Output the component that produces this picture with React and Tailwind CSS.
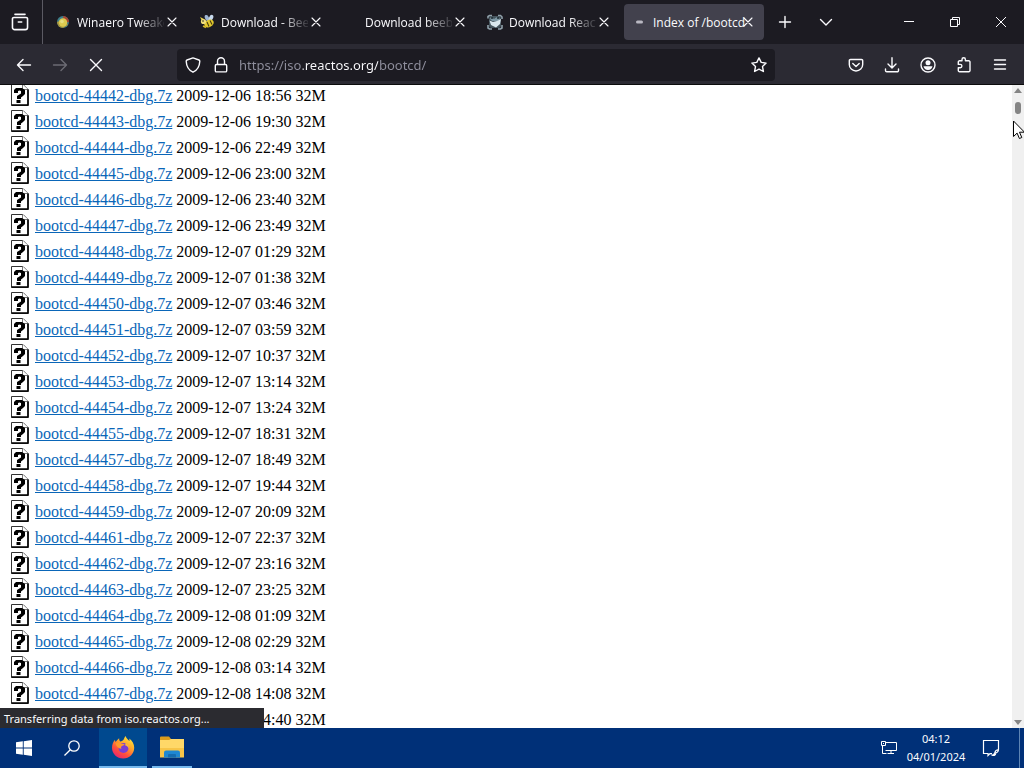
import { useState } from 'react';

const files = [
    ['44442', '2009-12-06 18:56'],
    ['44443', '2009-12-06 19:30'],
    ['44444', '2009-12-06 22:49'],
    ['44445', '2009-12-06 23:00'],
    ['44446', '2009-12-06 23:40'],
    ['44447', '2009-12-06 23:49'],
    ['44448', '2009-12-07 01:29'],
    ['44449', '2009-12-07 01:38'],
    ['44450', '2009-12-07 03:46'],
    ['44451', '2009-12-07 03:59'],
    ['44452', '2009-12-07 10:37'],
    ['44453', '2009-12-07 13:14'],
    ['44454', '2009-12-07 13:24'],
    ['44455', '2009-12-07 18:31'],
    ['44457', '2009-12-07 18:49'],
    ['44458', '2009-12-07 19:44'],
    ['44459', '2009-12-07 20:09'],
    ['44461', '2009-12-07 22:37'],
    ['44462', '2009-12-07 23:16'],
    ['44463', '2009-12-07 23:25'],
    ['44464', '2009-12-08 01:09'],
    ['44465', '2009-12-08 02:29'],
    ['44466', '2009-12-08 03:14'],
    ['44467', '2009-12-08 14:08'],
    ['44468', '2009-12-08 14:40'],
];

const tabs = [
    { title: 'Winaero Tweake', icon: <WinaeroIcon /> },
    { title: 'Download - Bee', icon: <BeeIcon /> },
    { title: 'Download beeb', icon: null },
    { title: 'Download React', icon: <ReactosIcon /> },
    { title: 'Index of /bootcd', icon: <LoadingIcon /> },
];

function Icon({ size = 16, width = 1.4, children }) {
    return (
        <svg
            width={size}
            height={size}
            viewBox="0 0 16 16"
            fill="none"
            stroke="currentColor"
            strokeWidth={width}
            strokeLinecap="round"
            strokeLinejoin="round"
            aria-hidden="true"
        >
            {children}
        </svg>
    );
}

function WinaeroIcon() {
    return (
        <svg width="14" height="14" viewBox="0 0 14 14" aria-hidden="true">
            <circle cx="7" cy="7" r="6" fill="#3d7f8c" />
            <path d="M7 1a6 6 0 0 1 6 6l-5 1z" fill="#a8452f" />
            <path d="M1 7a6 6 0 0 0 6 6l5-3-4-6z" fill="#a8953c" />
            <circle cx="7" cy="7.5" r="4.200" fill="#dccb50" />
            <circle cx="6" cy="6.500" r="1.8" fill="#e6df80" />
        </svg>
    );
}

function BeeIcon() {
    return (
        <svg width="16" height="16" viewBox="0 0 16 16" aria-hidden="true">
            <ellipse cx="8" cy="4" rx="2" ry="3.2" fill="#9fb6d4" transform="rotate(-25 8 4)" />
            <ellipse cx="12" cy="4" rx="2" ry="3.4" fill="#c7d9ee" transform="rotate(25 12 4)" />
            <path d="M1 3l4 2-2 2z" fill="#e8d44a" />
            <ellipse cx="10" cy="9.500" rx="5" ry="3.6" fill="#e2c92e" transform="rotate(-30 10 9.500)" />
            <path d="M8 8l2 4.500M11 6.500l2 4" stroke="#4a3c10" strokeWidth="1.100" />
            <circle cx="4.500" cy="7.500" r="2.600" fill="#f1e07a" />
            <circle cx="4" cy="7" r="0.800" fill="#222" />
            <path d="M4 12l3 1.500" stroke="#d9bd2a" strokeWidth="1.500" />
        </svg>
    );
}

function ReactosIcon() {
    return (
        <svg width="16" height="16" viewBox="0 0 16 16" aria-hidden="true">
            <rect x="2" y="2" width="12" height="12" rx="3" fill="#46555e" />
            <path
                d="M1 4.500V2.500L2.500 1.500H5M11 1.500h2.500L15 3v2M1 11v3l1.500 1H5M15 11v3l-1.500 1H11"
                fill="none"
                stroke="#8fa0aa"
                strokeWidth="1.600"
            />
            <path d="M4 3l3 2 3-2 3 2-2 2H5L3 5z" fill="#7d98a5" />
            <path d="M2.500 6.500L6 8l4-1 4-2-1 5-4 3.500L4 11z" fill="#dbe8ee" />
            <circle cx="5" cy="4" r="1" fill="#1d2b33" />
            <circle cx="11" cy="4" r="1" fill="#1d2b33" />
        </svg>
    );
}

function LoadingIcon() {
    return (
        <svg width="16" height="16" viewBox="0 0 16 16" aria-hidden="true">
            <rect x="5" y="6.500" width="7" height="3" rx="1.500" fill="#b9b8c2" />
        </svg>
    );
}

// Apache's "unknown file" icon
function UnknownFileIcon() {
    return (
        <svg className="mb-0.5 shrink-0" width="20" height="22" viewBox="0 0 20 22" aria-hidden="true">
            <path d="M1.500 .500H13L18 5.500V21.500H1.500z" fill="#fff" stroke="#333" />
            <path d="M12.500 .500V5.500H18" fill="#fff" stroke="#777" />
            <path d="M18 5.500V21H1.500" fill="none" stroke="#000" strokeWidth="1.600" />
            <path
                d="M4 9V6L6 4h6l3 2v4l-2 2-2 1.500v1.500H7V12l4-2.500V7L9.500 6.500 8 7v2z"
                fill="#000"
            />
            <path d="M6.500 16h4v3h-4z" fill="#000" />
        </svg>
    );
}

function FirefoxIcon() {
    return (
        <svg width="24" height="24" viewBox="0 0 24 24" aria-hidden="true">
            <defs>
                <linearGradient id="fox" x1="0.800" y1="0.100" x2="0.250" y2="0.950">
                    <stop offset="0" stopColor="#ffe03a" />
                    <stop offset="0.350" stopColor="#ffa42b" />
                    <stop offset="0.700" stopColor="#ff4f3c" />
                    <stop offset="1" stopColor="#e9286c" />
                </linearGradient>
            </defs>
            <path
                d="M14.500 1c.8 2.200 2.400 3.500 4 5 .1-.9 0-1.600-.3-2.400 3 2 5 5.600 5 9.200C23.200 19 18.300 23.500 12.200 23.500 6 23.500 1 18.900 1 12.800 1 9.600 2 7 4 4.800c0 1 .2 1.700.6 2.300C5.600 5.300 7 4.200 8.200 3.200c-.2 1.300.2 2.300 1 3.200 1.800-.1 2.800-.7 3.300-1.600.6-1.100 1-2.400 2-3.800z"
                fill="url(#fox)"
            />
            <circle cx="12.500" cy="13" r="5" fill="#7a3fd3" />
            <path d="M14.500 8c2.500 1 3.800 3.300 3.300 5.800-.7-1.800-1.800-2.900-3.600-3.200z" fill="#ffbd35" />
            <path d="M4.500 8.500c2-1.300 4.300-1.200 6.200.2 1.200-.1 2.300.1 3 .6-.8 1.200-2.100 1.400-3 1.900-.9.600-.8 1.600-.1 2.400-2.800.3-4.900-1.700-6.100-5.100z" fill="#ff9a2b" />
        </svg>
    );
}

function FolderIcon() {
    return (
        <svg width="24" height="24" viewBox="0 0 24 24" aria-hidden="true">
            <path d="M0 2.500Q0 1.500 1 1.500H9L11 4H23Q24 4 24 5V8H0z" fill="#d99a1c" />
            <path d="M0 5H9L11 4H24V22H0z" fill="#ffd868" />
            <path d="M0 13H24V22.500H0z" fill="#f7c548" />
            <path d="M4 22.500V17.500Q4 15.500 6 15.500H18Q20 15.500 20 17.500V22.500z" fill="#1e88d2" />
            <path d="M8 22.500V20Q8 19 9 19H15Q16 19 16 20V22.500z" fill="#146cb0" />
        </svg>
    );
}

function Tab({ tab, active, onClick }) {
    return (
        <div
            className={`flex h-9 w-[140px] shrink-0 items-center rounded pl-[7px] pr-2 font-['Open_Sans',sans-serif] ${active ? 'bg-[#42414d]' : ''}`}
        >
            <button className="flex min-w-0 flex-1 items-center gap-1.5 text-left" onClick={onClick}>
                <span className="flex size-4 shrink-0 items-center justify-center">{tab.icon}</span>
                <span
                    className={`min-w-0 flex-1 whitespace-nowrap pt-0.5 ${active ? '' : '[mask-image:linear-gradient(to_right,#000_60px,transparent_90px)]'}`}
                >
                    {tab.title}
                </span>
            </button>
            <button className="shrink-0" aria-label="Close tab">
                <Icon width={1.1}>
                    <path d="M4 4l8 8M12 4l-8 8" />
                </Icon>
            </button>
        </div>
    );
}

function NavButton({ label, children }) {
    return (
        <button className="flex h-8 w-9 items-center justify-center" aria-label={label}>
            {children}
        </button>
    );
}

function App() {
    const [activeTab, setActiveTab] = useState(4);
    const [url, setUrl] = useState('https://iso.reactos.org/bootcd/');

    return (
        <div className="relative flex h-screen flex-col overflow-hidden bg-white font-['Noto_Sans','Open_Sans',sans-serif] text-xs text-[#fbfbfe]">
            <div className="flex h-11 shrink-0 items-center bg-[#1c1b22]">
                <button className="flex h-full w-[43px] items-center justify-center border-r border-[#5b5a63] pr-0.5" aria-label="Recent browsing">
                    <Icon size={18}>
                        <path d="M3.500 1.200h9M2.500 4h11a1.200 1.200 0 0 1 1.200 1.200v7.600a2 2 0 0 1-2 2H3.300a2 2 0 0 1-2-2V5.200A1.200 1.200 0 0 1 2.500 4zM6.500 8h3" />
                    </Icon>
                </button>
                <div className="ml-[5px] flex gap-1">
                    {tabs.map((tab, i) => (
                        <Tab key={tab.title} tab={tab} active={i === activeTab} onClick={() => setActiveTab(i)} />
                    ))}
                </div>
                <button className="ml-px flex h-8 w-10 items-center justify-center" aria-label="New tab">
                    <Icon><path d="M8 2.500v11M2.500 8h11" /></Icon>
                </button>
                <button className="ml-px flex h-8 w-10 items-center justify-center" aria-label="List all tabs">
                    <Icon><path d="M2.500 5.500L8 11l5.500-5.500" /></Icon>
                </button>
                <div className="ml-auto flex h-full">
                    <button className="flex w-[46px] items-center justify-center" aria-label="Minimize">
                        <svg width="10" height="10" viewBox="0 0 10 10" stroke="currentColor"><path d="M0 4.500h10" /></svg>
                    </button>
                    <button className="flex w-[46px] items-center justify-center" aria-label="Restore">
                        <svg width="10" height="10" viewBox="0 0 10 10" fill="none" stroke="currentColor">
                            <path d="M.500 2.500h7v7h-7zM2.500 2.500v-2h7v7h-2" />
                        </svg>
                    </button>
                    <button className="flex w-[46px] items-center justify-center" aria-label="Close">
                        <svg width="10" height="10" viewBox="0 0 10 10" stroke="currentColor"><path d="M0 0l10 10M10 0L0 10" /></svg>
                    </button>
                </div>
            </div>

            <div className="flex h-[41px] shrink-0 items-center border-b border-[#0c0c0d] bg-[#2b2a33] px-1.5 pt-px">
                <NavButton label="Back">
                    <Icon><path d="M14.500 8H1.500M7 2.500L1.500 8 7 13.500" /></Icon>
                </NavButton>
                <NavButton label="Forward">
                    <span className="text-[#6c6b74]">
                        <Icon><path d="M1.500 8h13M9 2.500L14.500 8 9 13.500" /></Icon>
                    </span>
                </NavButton>
                <NavButton label="Stop">
                    <Icon><path d="M2.500 2.500l11 11M13.500 2.500l-11 11" /></Icon>
                </NavButton>
                <div className="mx-[63px] flex h-8 flex-1 items-center rounded bg-[#1c1b22] px-2">
                    <button aria-label="Tracking protection">
                        <Icon><path d="M8 .900l6 2.100c.600.200.800.600.800 1.200C14.600 9 12.500 13 8 15.200 3.500 13 1.400 9 1.200 4.200 1.200 3.600 1.400 3.200 2 3z" /></Icon>
                    </button>
                    <button className="ml-3" aria-label="Site information">
                        <Icon>
                            <path d="M3.500 7.500h9a1.200 1.200 0 0 1 1.200 1.200v5a1.200 1.200 0 0 1-1.200 1.200h-9a1.200 1.200 0 0 1-1.200-1.200v-5a1.200 1.200 0 0 1 1.200-1.200zM4.500 7.500V4.300a3.500 3.500 0 0 1 7 0v3.200" />
                        </Icon>
                    </button>
                    <input
                        className="ml-2.5 min-w-0 flex-1 bg-[linear-gradient(to_right,#8f8f9d_64px,#fbfbfe_64px,#fbfbfe_139px,#8f8f9d_139px)] bg-clip-text pt-0.5 text-[13px] text-transparent outline-none"
                        aria-label="Address"
                        value={url}
                        onChange={(e) => setUrl(e.target.value)}
                    />
                    <button aria-label="Bookmark this page">
                        <Icon><path d="M8 .900l2.200 4.500 4.900.700-3.600 3.500.900 4.900L8 12.200l-4.400 2.300.900-4.900L.900 6.100l4.900-.700z" /></Icon>
                    </button>
                </div>
                <NavButton label="Save to Pocket">
                    <Icon>
                        <path d="M2.500 2.500h11a1.200 1.200 0 0 1 1.200 1.200V7.500a6.700 6.500 0 0 1-13.400 0V3.700a1.200 1.200 0 0 1 1.200-1.200zM4.800 6.500L8 9.500l3.200-3" />
                    </Icon>
                </NavButton>
                <NavButton label="Downloads">
                    <Icon><path d="M8 .800v10M4 7l4 4 4-4M1.500 12v1.500a1.300 1.300 0 0 0 1.300 1.300h10.400a1.300 1.300 0 0 0 1.300-1.300V12" /></Icon>
                </NavButton>
                <NavButton label="Account">
                    <Icon>
                        <circle cx="8" cy="8" r="7" />
                        <circle cx="8" cy="5.800" r="2.500" fill="currentColor" stroke="none" />
                        <path d="M3.500 9.300h9a4.600 4.600 0 0 1-9 0z" fill="currentColor" stroke="none" />
                    </Icon>
                </NavButton>
                <NavButton label="Extensions">
                    <Icon>
                        <path d="M6 3.800V2.500a1.700 1.700 0 0 1 3.400 0v1.300h3.400a1.200 1.200 0 0 1 1.200 1.200v8.500a1.200 1.200 0 0 1-1.200 1.200H3.500a1.200 1.200 0 0 1-1.200-1.200v-2.700h1.900a1.700 1.700 0 0 0 0-3.400H2.300V5a1.200 1.200 0 0 1 1.200-1.200z" />
                    </Icon>
                </NavButton>
                <NavButton label="Menu">
                    <Icon><path d="M2.500 3h11M2.500 7.500h11M2.500 12h11" /></Icon>
                </NavButton>
            </div>

            <div className="relative flex min-h-0 flex-1">
                <main className="min-w-0 flex-1 overflow-hidden font-['Liberation_Serif','Times_New_Roman',serif] text-base text-black">
                    <ul className="-mt-0.5 pl-2.5">
                        {files.map(([rev, date]) => (
                            <li key={rev} className="flex h-[26px] items-center whitespace-pre">
                                <UnknownFileIcon />
                                <a href={`#${rev}`} className="ml-[5px] text-[#0a66b8] underline">
                                    {`bootcd-${rev}-dbg.7z`}
                                </a>
                                <span>{` ${date} 32M`}</span>
                            </li>
                        ))}
                    </ul>
                </main>
                <div className="flex w-3 flex-col items-center bg-[#f0f0f0] py-0.5">
                    <svg width="10" height="8" viewBox="0 0 10 8" fill="#858585"><path d="M5 1l4 5H1z" /></svg>
                    <div className="mt-[7px] h-3 w-1.5 rounded-full bg-[#858585]" />
                    <svg className="mt-auto" width="10" height="8" viewBox="0 0 10 8" fill="#858585"><path d="M5 7L1 2h8z" /></svg>
                </div>
                <div className="absolute bottom-0 left-0 h-5 w-[264px] bg-[#2b2b30] pl-1 pt-px text-[11px] leading-5">
                    Transferring data from iso.reactos.org...
                </div>
            </div>

            <div className="flex h-10 shrink-0 items-stretch bg-[#003078]">
                <button className="flex w-12 items-center justify-center" aria-label="Start">
                    <svg width="16" height="16" viewBox="0 0 16 16" fill="#fff">
                        <path d="M0 2.300l6.800-1v6.300H0zM7.700 1.200L16 0v7.600H7.700zM0 8.400h6.800v6.300L0 13.700zM7.700 8.400H16V16l-8.300-1.200z" />
                    </svg>
                </button>
                <button className="flex w-12 items-center justify-center" aria-label="Search">
                    <svg width="16" height="16" viewBox="0 0 16 16" fill="none" stroke="#fff" strokeWidth="1.300">
                        <circle cx="10" cy="6" r="5.200" />
                        <path d="M6.300 9.700L.500 15.500" />
                    </svg>
                </button>
                <button className="ml-[3px] flex w-12 items-center justify-center border-b-2 border-[#76b9ed] bg-[#00498f]" aria-label="Firefox">
                    <FirefoxIcon />
                </button>
                <button className="ml-[5px] flex w-10 items-center justify-center border-b-2 border-[#76b9ed]" aria-label="File Explorer">
                    <FolderIcon />
                </button>
                <div className="ml-auto flex items-center">
                    <button aria-label="Network">
                        <svg width="18" height="16" viewBox="0 0 18 16" fill="none" stroke="#fff">
                            <path d="M5.500 2.500h11v8h-11M11 10.500v3M7.500 13.500h6.500M2.500 5.500v8h4" />
                            <path d="M1.500 1.500h4v4h-4z" fill="#003078" />
                            <path d="M3 3.500h1" />
                        </svg>
                    </button>
                    <button className="w-[76px] text-center text-[11px] leading-[18px]">
                        <span className="block">04:12</span>
                        <span className="block">04/01/2024</span>
                    </button>
                    <button className="mx-2" aria-label="Notifications">
                        <svg width="18" height="18" viewBox="0 0 18 18" fill="none" stroke="#fff" strokeWidth="1.200">
                            <path d="M10 14.500H8L6 16.500v-2H1.500v-13h15V10" />
                            <path d="M16.500 10.500c-2 .300-3.500 1.500-3.800 3.500 2 .300 3.800-1.500 3.800-3.500z" />
                            <path d="M12.500 14c-.300 1.500-1.300 2-2.500 2 1.500 1 3.500.500 3.800-1.500" fill="#fff" />
                        </svg>
                    </button>
                    <div className="ml-[11px] h-full w-[5px] border-l border-[#5d84b4]" />
                </div>
            </div>

            {/* mouse pointer */}
            <svg className="absolute right-0 top-[120px]" width="11" height="20" viewBox="0 0 11 20" aria-hidden="true">
                <path d="M.500 1v15.500l3.600-3.400 2.300 5.400 2.400-1-2.300-5.300h5z" fill="#fff" stroke="#000" />
            </svg>
        </div>
    );
}

export default App;
